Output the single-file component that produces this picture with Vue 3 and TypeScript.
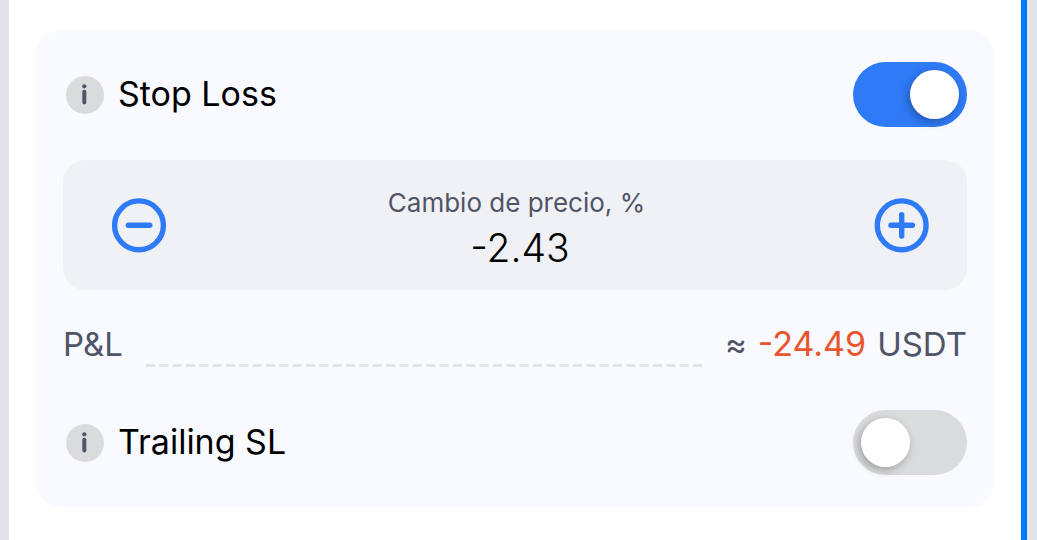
<script setup lang="ts">
import { ref } from 'vue'

const stopLoss = ref(true)
const trailing = ref(false)
const change = ref('-2.43')
const pnl = ref('-24.49')

function step(delta: number): void {
  change.value = (Number(change.value) + delta).toFixed(2)
}
</script>

<template>
  <main class="screen">
    <section class="card">
      <div class="row">
        <div class="name">
          <button class="info" type="button" aria-label="Info Stop Loss">
            <svg viewBox="0 0 38 38" aria-hidden="true">
              <circle cx="18.3" cy="10.3" r="2.1" />
              <rect x="16.3" y="13.8" width="4" height="14.6" rx="1.8" />
            </svg>
          </button>
          <label for="stop-loss">Stop Loss</label>
        </div>
        <input id="stop-loss" v-model="stopLoss" class="switch" type="checkbox" role="switch" />
      </div>

      <div class="stepper">
        <button class="step" type="button" aria-label="Menos" @click="step(-0.01)">
          <svg viewBox="0 0 54 54" aria-hidden="true">
            <circle cx="27" cy="27.3" r="24.4" />
            <path d="M16.4 27.3H37.8" />
          </svg>
        </button>
        <div class="field">
          <label for="change">Cambio de precio, %</label>
          <input id="change" v-model="change" type="text" inputmode="decimal" />
        </div>
        <button class="step" type="button" aria-label="Más" @click="step(0.01)">
          <svg viewBox="0 0 54 54" aria-hidden="true">
            <circle cx="26.7" cy="27.3" r="24.4" />
            <path d="M16 27.3H37.4M26.7 16.6V38" />
          </svg>
        </button>
      </div>

      <div class="pnl">
        <span>P&amp;L</span>
        <svg class="leader" aria-hidden="true">
          <line x1="0" y1="50%" x2="100%" y2="50%" pathLength="125" />
        </svg>
        <span class="amount"><span>≈</span><span class="loss">{{ pnl }}</span><span>USDT</span></span>
      </div>

      <div class="row">
        <div class="name">
          <button class="info" type="button" aria-label="Info Trailing SL">
            <svg viewBox="0 0 38 38" aria-hidden="true">
              <circle cx="18.3" cy="10.3" r="2.1" />
              <rect x="16.3" y="13.8" width="4" height="14.6" rx="1.8" />
            </svg>
          </button>
          <label for="trailing">Trailing SL</label>
        </div>
        <input id="trailing" v-model="trailing" class="switch" type="checkbox" role="switch" />
      </div>
    </section>
  </main>
</template>

<style>
body {
  margin: 0;
  background: #e5e3ea;
}
</style>

<style scoped>
.screen {
  box-sizing: border-box;
  min-height: 100vh;
  margin: 0 10px 0 9px;
  padding: 30px 27px;
  border-right: 6px solid #007aff;
  background: #fff;
  font-family: Inter, "Liberation Sans", sans-serif;
  font-size: 33px;
  line-height: 40px;
  color: #000;
}

.card {
  padding: 32px 27px;
  border-radius: 24px;
  background: #f9faff;
}

.row {
  display: flex;
  align-items: center;
  justify-content: space-between;
}

.name {
  display: flex;
  align-items: center;
  gap: 14px;
  padding-left: 3px;
  font-size: 34px;
}

.name label {
  padding-bottom: 2px;
}

button {
  display: block;
  padding: 0;
  border: 0;
  background: none;
  cursor: pointer;
}

button svg {
  display: block;
  width: 100%;
  height: 100%;
  overflow: visible;
}

.info {
  width: 38px;
  height: 38px;
  border-radius: 50%;
  background: #dadbdd;
}

.info svg {
  fill: #505467;
}

.switch {
  appearance: none;
  display: flex;
  box-sizing: border-box;
  width: 114px;
  height: 65px;
  margin: 0;
  padding: 8px;
  border-radius: 33px;
  background: #dadbdd;
  cursor: pointer;
}

.switch::before {
  content: "";
  width: 49px;
  height: 49px;
  border-radius: 50%;
  background: #fff;
  box-shadow: -2px 3px 8px rgba(0, 0, 0, 0.28);
}

.switch:checked {
  justify-content: flex-end;
  background: #2f7af6;
}

.stepper {
  display: flex;
  align-items: center;
  justify-content: space-between;
  box-sizing: border-box;
  min-height: 130px;
  margin-top: 33px;
  padding: 0 38px 0 49px;
  border-radius: 22px;
  background: #f0f1f5;
}

.step {
  width: 54px;
  height: 54px;
}

.step svg {
  fill: none;
  stroke: #2f7af6;
  stroke-width: 5.4;
  stroke-linecap: round;
}

.field {
  display: flex;
  flex: 1;
  flex-direction: column;
  align-items: center;
  padding: 4px 8px 0 0;
}

.field label {
  font-size: 26px;
  line-height: 40px;
  color: #505467;
}

.field input {
  box-sizing: border-box;
  width: 100%;
  height: 48px;
  padding: 0 0 0 7px;
  border: 0;
  outline: 0;
  background: none;
  font: inherit;
  font-size: 39px;
  font-weight: 300;
  color: #000;
  text-align: center;
}

.pnl {
  display: flex;
  align-items: center;
  gap: 23px;
  padding: 34px 0 46px;
  color: #505467;
}

.leader {
  flex: 1;
  align-self: flex-end;
  min-width: 0;
  height: 3px;
  margin-bottom: -3px;
}

.leader line {
  stroke: #e2e3e7;
  stroke-width: 3;
  stroke-dasharray: 2 1;
}

.amount {
  display: flex;
  gap: 11px;
}

.loss {
  font-size: 34px;
  color: #e8552d;
}
</style>
